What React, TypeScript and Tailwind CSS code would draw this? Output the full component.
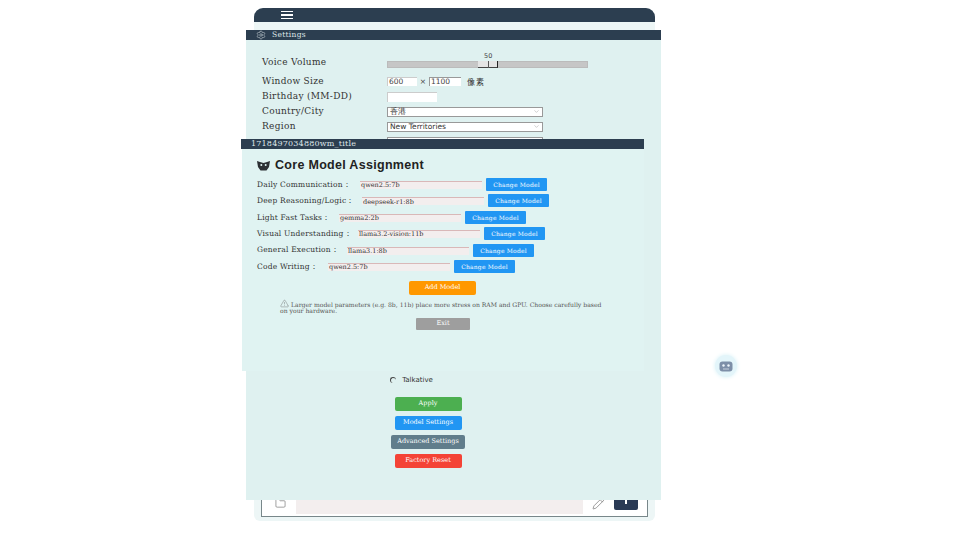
import { ChevronDown, Folder, Pencil, Settings, TriangleAlert } from "lucide-react";

const serif = "font-['DejaVu_Serif','Liberation_Serif',serif]";

const assignments = [
	{ label: "Daily Communication：", value: "qwen2.5:7b", labelWidth: "w-[103px]" },
	{ label: "Deep Reasoning/Logic：", value: "deepseek-r1:8b", labelWidth: "w-[105px]" },
	{ label: "Light Fast Tasks：", value: "gemma2:2b", labelWidth: "w-[82px]" },
	{ label: "Visual Understanding：", value: "llama3.2-vision:11b", labelWidth: "w-[101px]" },
	{ label: "General Execution：", value: "llama3.1:8b", labelWidth: "w-[90px]" },
	{ label: "Code Writing：", value: "qwen2.5:7b", labelWidth: "w-[71px]" },
];

const SettingRow = ({ label, children }: { label: string; children: React.ReactNode }) => (
	<div className="flex h-[15px] items-center">
		<label className="w-[125px] text-[9px] tracking-[0.3px] text-[#333]">{label}</label>
		{children}
	</div>
);

const FakeSelect = ({ value }: { value: string }) => (
	<div className="flex h-[10px] w-[156px] items-center justify-between border border-[#999] bg-white px-[2px] font-['DejaVu_Sans',sans-serif] text-[7.5px] text-[#333]">
		<span>{value}</span>
		<ChevronDown className="text-[#777]" size={7} strokeWidth={1.2} />
	</div>
);

const ActionButton = ({ label, className }: { label: string; className: string }) => (
	<button className={`flex h-[14px] items-center justify-center rounded-[2px] text-[6.5px] text-white ${className}`}>
		{label}
	</button>
);

export default function App() {
	return (
		<div className={`relative h-[540px] w-[960px] overflow-hidden bg-white ${serif}`}>
			{/* MAIN WINDOW */}
			<div className="absolute left-[254px] top-[8px] flex h-[513px] w-[401px] flex-col rounded-b-[6px] rounded-t-[9px] bg-[#edf6f6]">
				<div className="flex h-[14px] items-center rounded-t-[9px] bg-[#2c3e50] pl-[27px]">
					<div className="flex w-[12px] flex-col gap-[2px]">
						<span className="h-[1.5px] bg-white" />
						<span className="h-[1.5px] bg-white" />
						<span className="h-[1.5px] bg-white" />
					</div>
				</div>
				<div className="flex-1" />
				<div className="mx-[7px] mb-[4px] flex h-[30px] items-start border-x border-b border-[#78878a] bg-white pl-[13px] pr-[9px]">
					<Folder className="mt-[11px] text-[#555]" size={11} strokeWidth={1.2} />
					<div className="ml-[10px] h-[27px] w-[287px] bg-[#f3eeee]" />
					<Pencil className="ml-[9px] mt-[10px] text-[#666]" size={13} strokeWidth={1.2} />
					<div className="relative ml-[9px] h-[23px] w-[24px] rounded-b-[2px] bg-[#2a3a55]">
						<span className="absolute bottom-[6px] left-[11px] h-[6px] w-[2px] bg-white" />
					</div>
				</div>
			</div>

			{/* SETTINGS WINDOW */}
			<div className="absolute left-[246px] top-[30px] flex h-[470px] w-[415px] flex-col bg-[#dff1f0]">
				<div className="flex h-[10px] items-center gap-[6px] bg-[#2c3e50] pl-[10px] text-[7.5px] text-[#dfe6e9]">
					<Settings size={10} strokeWidth={1.2} />
					<span className="tracking-[0.3px]">Settings</span>
				</div>
				<div className="flex flex-col pl-[16px] pt-[14px]">
					<div className="flex h-[17px] items-center">
						<label className="w-[125px] text-[9px] tracking-[0.3px] text-[#333]">Voice Volume</label>
						<div className="relative mt-[4px] h-[7px] w-[201px] border border-[#bbb] bg-[#c6c6c6]">
							<span className="absolute -top-[10px] left-[96px] font-['DejaVu_Sans',sans-serif] text-[6.5px] text-[#444]">50</span>
							<span className="absolute -top-[1px] left-[90px] h-[7px] w-[20px] border-b border-r border-b-[#444] border-r-[#222] bg-[#e4e4e4]" />
							<span className="absolute -top-[1px] left-[100px] h-[7px] w-px bg-[#555]" />
						</div>
					</div>
					<div className="h-[3px]" />
					<SettingRow label="Window Size">
						<div className="flex items-center font-['DejaVu_Sans',sans-serif] text-[7.5px] text-[#444]">
							<span className="flex h-[9px] w-[30px] items-center border-l border-t border-[#ccc] bg-white pl-[1px]">600</span>
							<span className="w-[12px] text-center">×</span>
							<span className="flex h-[9px] w-[32px] items-center border-l border-t border-[#999] bg-white pl-[1px]">1100</span>
							<span className="ml-[6px] font-['Noto_Sans_CJK_TC',sans-serif] text-[8px] tracking-[1px] text-[#333]">像素</span>
						</div>
					</SettingRow>
					<SettingRow label="Birthday (MM-DD)">
						<div className="h-[10px] w-[50px] border-l border-t border-[#ccc] bg-white" />
					</SettingRow>
					<SettingRow label="Country/City">
						<FakeSelect value="香港" />
					</SettingRow>
					<SettingRow label="Region">
						<FakeSelect value="New Territories" />
					</SettingRow>
					{/* this row sits behind the model window, only the top of the box shows */}
					<SettingRow label="">
						<FakeSelect value="" />
					</SettingRow>
				</div>

				<div className="mt-[226px] flex items-center justify-center pr-[84px] font-['DejaVu_Sans',sans-serif] text-[7px] text-[#333]">
					<span className="mr-[6px] h-[6px] w-[6px] rounded-full border-l border-t border-[#444]" />
					Talkative
				</div>
				<div className="mt-[11px] flex flex-col items-center gap-[5px] pr-[51px]">
					<ActionButton label="Apply" className="w-[67px] bg-[#4caf50]" />
					<ActionButton label="Model Settings" className="w-[67px] bg-[#2196f3]" />
					<ActionButton label="Advanced Settings" className="w-[74px] bg-[#607d8b]" />
					<ActionButton label="Factory Reset" className="w-[67px] bg-[#f44336]" />
				</div>
			</div>

			{/* MODEL WINDOW */}
			<div className="absolute left-[241px] top-[139px] flex h-[232px] w-[403px] flex-col">
				<div className="flex h-[10px] shrink-0 items-center bg-[#2c3e50] pl-[10px] text-[8px] tracking-[0.2px] text-[#dfe6e9]">
					1718497034880wm_title
				</div>
				<div className="ml-[1px] flex flex-1 flex-col bg-[#e0f3f2] pl-[15px]">
					<h2 className="mt-[9px] flex h-[14px] items-center font-['Liberation_Sans',sans-serif] text-[12.5px] font-bold tracking-[0.3px] text-[#222]">
						<svg className="mr-[5px]" width="13" height="11" viewBox="0 0 13 11" aria-hidden="true">
							<path d="M0 1l3 1 3.5 1L10 2l3-1-1 6-2.5 3.500h-6L1 7z" fill="#2b2f33" />
							<circle cx="4.300" cy="5" r="1" fill="#e0f3f2" />
							<circle cx="8.700" cy="5" r="1" fill="#e0f3f2" />
						</svg>
						Core Model Assignment
					</h2>
					<div className="mt-[6px] flex flex-col gap-[3.400px]">
						{assignments.map((row) => (
							<div key={row.label} className="flex h-[13px] items-center text-[7.500px] text-[#333]">
								<span className={`tracking-[0.2px] ${row.labelWidth} whitespace-nowrap`}>{row.label}</span>
								<div className="mt-[1px] flex h-[8px] w-[122px] items-center border-t border-[#d9b8b8] bg-[#f3eeee] pl-[1px] text-[6.500px] leading-none">
									{row.value}
								</div>
								<button className="ml-[4px] flex h-[13px] w-[61px] items-center justify-center rounded-[1px] bg-[#2196f3] text-[6px] tracking-[0.2px] text-white">
									Change Model
								</button>
							</div>
						))}
					</div>
					<div className="mt-[8px] flex justify-center pr-[16px]">
						<ActionButton label="Add Model" className="w-[67px] bg-[#ff9800]" />
					</div>
					<div className="ml-[23px] mt-[4px] w-[328px] text-[6.100px] leading-[6px] text-[#555]">
						<TriangleAlert className="mr-[2px] inline-block align-[-1px]" size={9} strokeWidth={1} />
						Larger model parameters (e.g. 8b, 11b) place more stress on RAM and GPU. Choose carefully based on your hardware.
					</div>
					<div className="mt-[4px] flex justify-center pr-[15px]">
						<button className="flex h-[12px] w-[54px] items-center justify-center rounded-[1px] bg-[#9e9e9e] text-[6.500px] text-white">
							Exit
						</button>
					</div>
				</div>
			</div>

			{/* FLOATING ASSISTANT */}
			<div className="absolute left-[715px] top-[355px] flex h-[22px] w-[22px] items-center justify-center rounded-full bg-[#e3f5fa] shadow-[0_0_4px_#d5f0f6]">
				<svg width="14" height="11" viewBox="0 0 14 11" aria-hidden="true">
					<rect x="0.500" y="0.500" width="13" height="10" rx="3" fill="#7d8fa8" />
					<circle cx="4.500" cy="4.500" r="1.200" fill="#eef5fb" />
					<circle cx="9.500" cy="4.500" r="1.200" fill="#eef5fb" />
					<rect x="4" y="7.500" width="6" height="1" fill="#c5d0dc" />
				</svg>
			</div>
		</div>
	);
}
